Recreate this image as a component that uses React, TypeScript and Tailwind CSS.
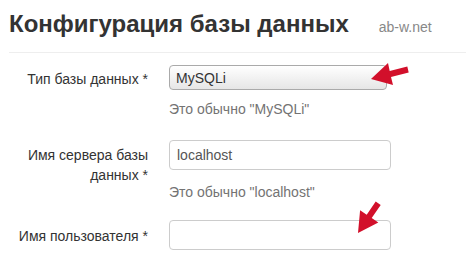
import React from 'react';

// Red callout arrows drawn over the form
const Arrows = () => (
  <svg className="absolute inset-0 pointer-events-none" width="466" height="260" viewBox="0 0 466 260">
    <polygon
      fill="#d2102b"
      points="371,79 393,85 391,77 408.7,72.4 407.3,66.6 389.7,71.1 388,63"
    />
    <polygon
      fill="#d2102b"
      points="358,233 378.3,222.6 371.7,218.1 380.7,204.9 375.7,201.5 366.7,214.7 360.1,210.2"
    />
  </svg>
);

export default function App() {
  return (
    <div className="relative w-[466px] h-[260px] overflow-hidden bg-white text-[#333] font-['Liberation_Sans',Arial,sans-serif]">
      {/* Header */}
      <div className="ml-[9px] h-[53px] border-b border-[#eee] flex items-baseline gap-[30px] pt-[9px]">
        <h1 className="text-[24px] leading-[30px] font-bold text-[#333]">Конфигурация базы данных</h1>
        <span className="text-[14px] text-[#888]">ab-w.net</span>
      </div>

      {/* Form */}
      <div className="grid grid-cols-[133px_1fr] gap-x-[21px] pl-[15px] text-[14px] leading-[20px]">
        {/* DB type */}
        <label className="text-right mt-[16px]">Тип базы данных *</label>
        <div className="mt-[12px]">
          <div className="w-[218px] h-[25px] rounded-[4px] border border-[#aaa] bg-gradient-to-b from-white to-[#e6e6e6] flex items-center px-[6px] text-[#333]">
            MySQLi
          </div>
          <div className="mt-[9px] text-[#737373]">Это обычно "MySQLi"</div>
        </div>

        {/* Server */}
        <label className="text-right mt-[26px]">Имя сервера базы данных *</label>
        <div className="mt-[21px]">
          <div className="w-[222px] h-[30px] rounded-[4px] border border-[#ccc] flex items-center px-[7px] text-[#555]">
            localhost
          </div>
          <div className="mt-[12px] text-[#737373]">Это обычно "localhost"</div>
        </div>

        {/* User */}
        <label className="text-right mt-[24px]">Имя пользователя *</label>
        <div className="mt-[18px]">
          <div className="w-[222px] h-[30px] rounded-[4px] border border-[#ccc]" />
        </div>
      </div>

      <Arrows />
    </div>
  );
}
